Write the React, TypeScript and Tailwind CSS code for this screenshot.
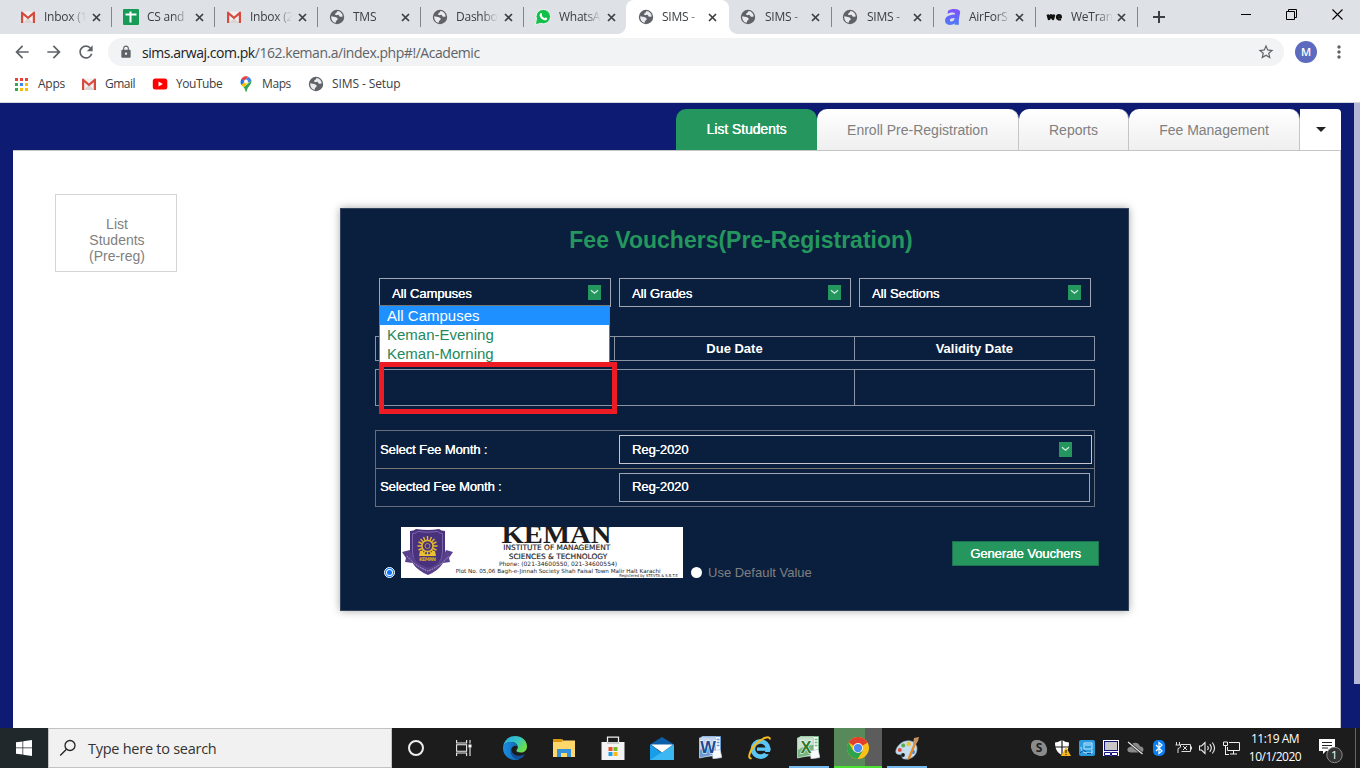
import React from "react";
import { MdArrowBack, MdArrowForward, MdRefresh, MdLock, MdStarBorder, MdMoreVert } from "react-icons/md";

const ui = "font-['Open_Sans','Noto_Sans',sans-serif]";

function Globe() {
  return (
    <svg width="16" height="16" viewBox="0 0 16 16">
      <circle cx="8" cy="8" r="7.2" fill="#5f6368" />
      <path d="M2.2 7.2C4 7.4 5.6 7.6 7.4 8.6 8.8 9.4 9.2 10.2 8 11.2 6.6 12 7 12.8 6.8 13.8 4 13.4 2 10.6 2.2 7.2Z" fill="#e9ebee" />
      <path d="M8.6 2.1c-.8.8-.4 1.3-1.6 1.8-1.2.4-1.2 1.6-.2 2.2 1.2.4 1.6-.6 2.8-.2.8.4.6 1.4 1.6 1.8.8.3 1.6-.4 2.6-.1C13.6 4.6 11.4 2.4 8.600 2.100Z" fill="#e9ebee" />
    </svg>
  );
}

function Gmail() {
  return (
    <svg width="16" height="16" viewBox="0 0 16 16">
      <rect x="1" y="2.5" width="14" height="11.500" rx="1" fill="#f1efef" />
      <path d="M3 14 8 9l5 5Z" fill="#d8d5d5" />
      <path d="M1 3.500C1 2.800 1.500 2.500 2.200 2.500L8 7.400l5.800-4.900c.7 0 1.200.3 1.200 1V14h-2.200V6.300L8 10.300 3.200 6.300V14H1Z" fill="#d54b3d" />
    </svg>
  );
}

function Sheets() {
  return (
    <svg width="16" height="16" viewBox="0 0 16 16">
      <rect width="16" height="16" rx="1" fill="#169c56" />
      <path d="M2.500 5.500h11M7.500 2.500v11" stroke="#fff" strokeWidth="2" />
    </svg>
  );
}

function WhatsApp() {
  return (
    <svg width="16" height="16" viewBox="0 0 16 16">
      <path d="M1.500 9.800.3 15.700l5.500-1.400" fill="#fff" />
      <circle cx="8.300" cy="7.600" r="7.200" fill="#12bf4b" stroke="#fff" strokeWidth=".8" />
      <path d="M1.800 10.200 1 15l4.600-1.100" fill="#12bf4b" />
      <path d="M5.600 4.200c.8-.6 1.200.2 1.500 1.200.1.500-.6.800-.4 1.200.6 1.200 1.500 2 2.600 2.500.5.200.8-.8 1.300-.7.700.3 1.800.7 1.600 1.300-.3 1.400-1.600 1.900-3 1.500C6.700 10.400 5.200 8.600 4.700 7c-.3-1.200.2-2.300.9-2.800Z" fill="#fff" />
    </svg>
  );
}

function AirIcon() {
  return (
    <svg width="17" height="18" viewBox="0 0 17 18" className="shrink-0">
      <defs>
        <linearGradient id="air" x1="0" y1="0" x2="0" y2="1">
          <stop offset="0" stopColor="#8050ff" />
          <stop offset="1" stopColor="#4c7cf5" />
        </linearGradient>
      </defs>
      <path d="M4 2.800C7 .6 14.500.2 16 3.300c.5 1.300-.2 3-.7 5.500-.4 2-.6 3.500-.4 8h-4.300l.1-1.500C8 18 1.500 17.600 1.100 13.200.7 8.800 5 6.600 11 6.600c.6-2.500-3.400-2.800-7.500-.7Zm6.700 7.200c-3 0-4.900.7-4.800 2.400.1 2.100 4.400 1.400 4.800-2.400Z" fill="url(#air)" />
    </svg>
  );
}

function WeIcon() {
  return (
    <svg width="17" height="10" viewBox="0 0 17 10" className="shrink-0">
      <path d="M1.800 2.500 3 6.800 5 3.500 7 6.800 8 2.500" fill="none" stroke="#111" strokeWidth="2.700" strokeLinejoin="round" />
      <path d="M10.800 5.200h4.200C15 2.500 10.800 2.300 10.800 5s2.400 2.800 4.200 2.200" fill="none" stroke="#111" strokeWidth="2" />
    </svg>
  );
}

function TabX() {
  return (
    <svg width="9" height="9" viewBox="0 0 9 9">
      <path d="m1 1 7 7m0-7-7 7" stroke="#3c4043" strokeWidth="1.700" />
    </svg>
  );
}

const tabs: { t: string; icon: React.ReactNode; cls: string }[] = [
  { t: "Inbox (1", icon: <Gmail />, cls: "w-[103px]" },
  { t: "CS and", icon: <Sheets />, cls: "w-[103px]" },
  { t: "Inbox (2", icon: <Gmail />, cls: "w-[103px]" },
  { t: "TMS", icon: <Globe />, cls: "w-[103px]" },
  { t: "Dashbo", icon: <Globe />, cls: "w-[103px]" },
  { t: "WhatsA", icon: <WhatsApp />, cls: "w-[103px]" },
  { t: "SIMS -", icon: <Globe />, cls: "w-[103px]" },
  { t: "SIMS -", icon: <Globe />, cls: "w-[102px]" },
  { t: "SIMS -", icon: <Globe />, cls: "w-[102px]" },
  { t: "AirForS", icon: <AirIcon />, cls: "w-[102px]" },
  { t: "WeTran", icon: <WeIcon />, cls: "w-[102px]" },
];

function TabStrip() {
  return (
    <div className="flex h-[34px] bg-[#dee1e6] pl-2">
      {tabs.map((tab, i) => {
        const active = i === 6;
        return (
          <div key={i} className={`relative flex h-[34px] shrink-0 items-center pl-3 ${tab.cls} ${active ? "rounded-t-lg bg-white" : ""}`}>
            {active && (
              <>
                <span className="absolute bottom-0 -left-2 size-2 bg-[radial-gradient(circle_at_0_0,transparent_7.5px,white_8px)]" />
                <span className="absolute -right-2 bottom-0 size-2 bg-[radial-gradient(circle_at_100%_0,transparent_7.5px,white_8px)]" />
              </>
            )}
            <span className={`flex w-4 shrink-0 justify-center ${i > 6 ? "-ml-px mr-px" : ""}`}>{tab.icon}</span>
            <span className="ml-2 w-[42px] shrink-0 text-[12px] tracking-[-0.25px] whitespace-nowrap text-[#3c4043] [mask-image:linear-gradient(90deg,black_26px,transparent_42px)]">{tab.t}</span>
            <span className={i > 5 ? "ml-1" : "ml-[5.500px]"}><TabX /></span>
            {i !== 5 && i !== 6 && <span className="absolute top-[7px] -right-px h-5 w-px bg-[#80868b]" />}
          </div>
        );
      })}
      <span className="flex w-11 items-center justify-center">
        <svg width="12" height="12" viewBox="0 0 12 12"><path d="M6 0v12M0 6h12" stroke="#3c4043" strokeWidth="2" /></svg>
      </span>
      <div className="ml-auto flex h-7 items-center gap-[35px] pr-[17px]">
        <svg width="10" height="10" viewBox="0 0 10 10"><path d="M0 5.500h10" stroke="#000" /></svg>
        <svg width="11" height="11" viewBox="0 0 11 11" fill="none" stroke="#000"><path d="M.5 2.500h8v8h-8zM2.500 2.500v-2h8v8h-2" /></svg>
        <svg width="11" height="11" viewBox="0 0 11 11"><path d="m.5.5 10 10m0-10-10 10" stroke="#000" strokeWidth="1.100" /></svg>
      </div>
    </div>
  );
}

function Toolbar() {
  return (
    <div className="flex h-[36px] items-center bg-white pl-3">
      <MdArrowBack className="size-5 text-[#5f6368]" />
      <MdArrowForward className="ml-3 size-5 text-[#5f6368]" />
      <MdRefresh className="ml-3 size-5 text-[#5f6368]" />
      <div className="ml-3 flex h-7 w-[1176px] items-center rounded-full bg-[#f1f3f4] pr-[9px] pl-[11px]">
        <MdLock className="size-[14px] text-[#5f6368]" />
        <span className="ml-[9px] text-[14px] tracking-[-0.46px] text-[#5f6368]">
          <span className="text-[#202124]">sims.arwaj.com.pk</span>/162.keman.a/index.php#!/Academic
        </span>
        <MdStarBorder className="ml-auto size-[18px] text-[#5f6368]" />
      </div>
      <span className="ml-[11px] flex size-[22px] items-center justify-center rounded-full bg-[#5c6bc0] text-[11px] font-semibold text-white">M</span>
      <MdMoreVert className="ml-3 size-5 text-[#5f6368]" />
    </div>
  );
}

function Bookmarks() {
  const dots = ["#ea4335", "#ea4335", "#ea4335", "#34a853", "#4285f4", "#fbbc05", "#34a853", "#fbbc05", "#fbbc05"];
  return (
    <div className="flex h-[33px] items-center border-b border-[#d5d7da] bg-white pb-1 pl-[14px] text-[12px] text-[#3c4043]">
      <svg width="14" height="14" viewBox="0 0 14 14">
        {dots.map((c, i) => <rect key={i} x={1 + (i % 3) * 5} y={1 + Math.floor(i / 3) * 5} width="3" height="3" fill={c} />)}
      </svg>
      <span className="ml-[10px] w-[43px] tracking-[-0.25px]">Apps</span>
      <Gmail />
      <span className="ml-2 w-[47px] tracking-[-0.5px]">Gmail</span>
      <svg width="16" height="16" viewBox="0 0 16 16"><rect x=".8" y="2.500" width="14.500" height="11" rx="2.500" fill="#f00" /><path d="m6.500 5.500 4.300 2.500-4.300 2.500Z" fill="#fff" /></svg>
      <span className="ml-2 w-[62px] tracking-[-0.45px]">YouTube</span>
      <svg width="16" height="16" viewBox="0 0 16 16">
        <path d="M3.500 9.200C2 7 2.300 4.500 3.700 2.500L7 5.500Z" fill="#1a73e8" />
        <path d="M3.600 2.600C5.500.2 8.200 0 10 .7L6.500 5.800Z" fill="#ea4335" />
        <path d="M10 .7c2 .7 3.300 2.500 3.400 4.300L9.500 7 7.500 3.700Z" fill="#4285f4" />
        <path d="m3.500 9 3-3.500L9.700 7 5.600 11.600Z" fill="#fbbc04" />
        <path d="M13.400 4.500c.3 4.500-4 6-4.700 10.800-.2.700-1 .7-1.200 0-.3-1.500-.8-2.500-1.900-3.700L13.400 4.500Z" fill="#34a853" />
        <circle cx="8" cy="5.500" r="1.900" fill="#fff" />
      </svg>
      <span className="ml-2 w-[46px] tracking-[-0.4px]">Maps</span>
      <Globe />
      <span className="ml-2 tracking-[-0.1px]">SIMS - Setup</span>
    </div>
  );
}

function NavTab({ label, cls }: { label: string; cls: string }) {
  return (
    <div className={`flex h-full items-center justify-center rounded-t-[10px] border-r border-[#c5c5c5] bg-linear-to-b from-white to-[#efefef] pt-[2px] text-[#808080] ${cls}`}>{label}</div>
  );
}

function Chev() {
  return (
    <span className="mb-px flex h-[15px] w-[13px] items-center justify-center bg-[#24965e]">
      <svg width="9" height="6" viewBox="0 0 9 6"><path d="m1 1.200 3.500 3L8 1.200" fill="none" stroke="#d8eee2" strokeWidth="1.200" /></svg>
    </span>
  );
}

function Select({ label, children }: { label: string; children?: React.ReactNode }) {
  return (
    <div className="relative flex h-[29px] w-[232px] items-center justify-between border border-[#a0a7b2] pr-[9px] pl-3 text-[13px] text-white [text-shadow:0.3px_0_0_white]">
      <span className="pt-[2px] tracking-[-0.05px]">{label}</span>
      <Chev />
      {children}
    </div>
  );
}

function Banner() {
  return (
    <svg width="282" height="51" viewBox="0 0 282 51" className="block">
      <rect width="282" height="51" fill="#fff" />
      <path d="M9 4q4 0 6-2 12 2 23 0 2 2 6 2V25Q44 41 27 47 9 41 9 25Z" fill="#49327d" />
      <path d="M11.500 6.500q4 0 5-2 10 1.500 20 0 2 2 5 2V25q0 13-14.500 18.500Q11.500 38 11.500 25Z" fill="none" stroke="#8a72b5" strokeWidth=".8" />
      <path d="M1 25 9 23q4 14 18 18 14-4 18-18l7 2-4 6 1 4-7 1q-5 8-15 12-10-4-15-12L4 35l1-4Z" fill="#59418d" />
      <path d="M6 29q8 10 21 15 13-5 21-15" fill="none" stroke="#b9abd0" strokeWidth="1" strokeDasharray="1.500 1" />
      <g stroke="#e5b92e" strokeWidth="1.400" transform="translate(26.500 19)">
        <path d="M0-10V10M-10 0H10M-7-7 7 7M7-7-7 7M-4-9 4 9M4-9-4 9M-9-4 9 4M9-4-9 4" />
        <circle r="5.500" fill="#49327d" />
        <circle r="2.500" fill="none" strokeWidth=".7" />
      </g>
      <path d="M19 24q3-1 4 2 1 2 3.500 1 2.500 1 3.500-1 1-3 4-2l1 5H18Z" fill="#e9c232" />
      <text x="18" y="34" textLength="17" fontSize="5" fontWeight="bold" fill="#d6a62b" fontFamily="DejaVu Sans">KEMAN</text>
      <g fill="#1d1d1d">
        <text x="100.500" y="16" textLength="110" lengthAdjust="spacingAndGlyphs" fontSize="25" fontWeight="bold" fontFamily="Liberation Serif, serif">KEMAN</text>
        <g fontFamily="DejaVu Sans, sans-serif">
          <text x="102.300" y="23" textLength="107" lengthAdjust="spacingAndGlyphs" fontSize="7.300" stroke="#1d1d1d" strokeWidth=".15">INSTITUTE OF MANAGEMENT</text>
          <text x="107.700" y="32" textLength="98.500" lengthAdjust="spacingAndGlyphs" fontSize="7.300" stroke="#1d1d1d" strokeWidth=".15">SCIENCES &amp; TECHNOLOGY</text>
          <text x="98" y="39.300" textLength="118" lengthAdjust="spacingAndGlyphs" fontSize="6">Phone: (021-34600550, 021-34600554)</text>
          <text x="54.700" y="46" textLength="205" lengthAdjust="spacingAndGlyphs" fontSize="5.600">Plot No. 05,06 Bagh-e-Jinnah Society Shah Faisal Town Malir Halt Karachi</text>
          <text x="218.300" y="50" textLength="58.500" lengthAdjust="spacingAndGlyphs" fontSize="4">Registered by STEVTA &amp; S.B.T.E</text>
        </g>
      </g>
    </svg>
  );
}

function Card() {
  const line = "border-[#8a93a1]";
  return (
    <div className="mt-[57px] ml-[163px] flex h-[403px] w-[789px] flex-col border border-[#33435c] bg-[#0a1f3d] pl-[34px] text-[13px] text-white shadow-[0_0_8px_rgba(0,0,0,0.35)]">
      <h1 className="mt-[17px] mr-[21px] h-7 text-center text-[23px] leading-7 font-bold text-[#24965e]">Fee Vouchers(Pre-Registration)</h1>
      <div className="mt-6 ml-1 flex gap-2">
        <Select label="All Campuses">
          <div className="absolute top-[26px] -left-px z-10 w-[231px] border border-[#767676] bg-white text-[15px] leading-[19px] text-[#24885c] [text-shadow:none]">
            <div className="bg-[#1e90ff] pl-[7px] text-white">All Campuses</div>
            <div className="pl-[7px]">Keman-Evening</div>
            <div className="h-[19px] pl-[7px]">Keman-Morning</div>
          </div>
        </Select>
        <Select label="All Grades" />
        <Select label="All Sections" />
      </div>
      <div className={`mt-[29px] grid h-[25px] w-[720px] grid-cols-3 border text-center leading-[23px] font-bold ${line}`}>
        <div className={`border-r ${line}`} />
        <div className={`border-r ${line}`}>Due Date</div>
        <div>Validity Date</div>
      </div>
      <div className={`relative mt-2 grid h-[37px] w-[720px] shrink-0 grid-cols-3 border ${line}`}>
        <div className={`border-r ${line}`} />
        <div className={`border-r ${line}`} />
        <div />
        <div className="absolute -top-2 left-[3px] z-20 h-[52px] w-[238px] border-[5px] border-[#ed1c24]" />
      </div>
      <div className="mt-6 w-[720px] border border-[#666e7b] tracking-[-0.1px] [text-shadow:0.3px_0_0_white]">
        <div className="flex h-[38px] items-center border-b border-[#777]">
          <span className="w-[243px] shrink-0 pl-[4px]">Select Fee Month :</span>
          <div className="flex h-[29px] w-[473px] shrink-0 items-center justify-between border border-[#c4c8ce] pr-[19px] pl-3"><span className="pt-px">Reg-2020</span><Chev /></div>
        </div>
        <div className="flex h-[37px] items-center">
          <span className="w-[243px] shrink-0 pb-[2px] pl-[4px]">Selected Fee Month :</span>
          <div className="flex h-[29px] w-[471px] shrink-0 items-center border border-[#a0a7b2] pb-px pl-3">Reg-2020</div>
        </div>
      </div>
      <div className="mt-5 flex items-start">
        <span className="mt-[40px] ml-[9px] flex size-[11px] items-center justify-center rounded-full border border-white bg-[#0b75ff]"><span className="flex size-[7px] items-center justify-center rounded-full bg-white"><span className="size-[5px] rounded-full bg-[#0b75ff]" /></span></span>
        <div className="ml-[6px]"><Banner /></div>
        <span className="mt-[40px] ml-2 size-[11px] rounded-full bg-white" />
        <span className="mt-[36px] ml-[6px] w-[244px] text-[13px] leading-5 text-[#808080]">Use Default Value</span>
        <div className="mt-[14px] h-[25px] w-[147px] border border-[#1c7150] bg-[#24965e] text-center leading-[23px] tracking-[-0.08px] [text-shadow:0.3px_0_0_white]">Generate Vouchers</div>
      </div>
    </div>
  );
}

function Page() {
  return (
    <div className="flex h-[625px] bg-[#0d1b72] pl-[13px] font-['Liberation_Sans',Arial,sans-serif] text-[14px]">
      <div className="w-[1328px] shrink-0">
        <div className="mt-[6px] flex h-[41px] pl-[663px]">
          <div className="flex h-full w-[141px] items-center justify-center rounded-t-[10px] bg-[#24965e] tracking-[-0.08px] text-white [text-shadow:0.3px_0_0_white]">List Students</div>
          <NavTab label="Enroll Pre-Registration" cls="w-[202px]" />
          <NavTab label="Reports" cls="w-[110px]" />
          <NavTab label="Fee Management" cls="w-[171px]" />
          <div className="flex h-full grow items-center justify-center rounded-tr-sm bg-white">
            <svg width="10" height="5" viewBox="0 0 10 5"><path d="M0 0h10L5 5Z" fill="#222" /></svg>
          </div>
        </div>
        <div className="flex h-[578px] items-start border-t border-r border-[#c5c5c5] bg-white">
          <div className="mt-[43px] ml-[42px] h-[78px] w-[122px] border border-[#d4d4d4] pt-[21px] pl-[2px] text-center leading-4 text-[#808080]">List<br />Students<br />(Pre-reg)</div>
          <Card />
        </div>
      </div>
      <div className="ml-[13px] h-[581px] w-[6px] bg-[#b4b8d6]" />
    </div>
  );
}

function Edge() {
  return (
    <svg width="24" height="24" viewBox="0 0 24 24">
      <defs>
        <linearGradient id="e1" x1="0" x2="1" y1="0" y2=".5"><stop offset="0" stopColor="#2aa6e2" /><stop offset=".6" stopColor="#35c6c4" /><stop offset="1" stopColor="#6ede47" /></linearGradient>
        <linearGradient id="e2" x1="0" x2="1"><stop offset="0" stopColor="#1b8fe0" /><stop offset="1" stopColor="#1264b5" /></linearGradient>
      </defs>
      <path d="M0 11C1 4 6 0 12 0c8 0 12 5.500 12 10.500 0 4-3 6-6 6-3.500 0-5-1-4.500-2.500.4-.8 1.300-1.200 1.300-2.800C14.800 9 12.500 6 8.500 6 4 6 1 8.500 0 11Z" fill="url(#e1)" />
      <path d="M0 11c1-3 4-5 8-5 3.500 0 6 2 6.600 4.500C13 8.500 8 10 8 14.500c0 5 4.500 8 8.500 9C7 26 0 19.500 0 12Z" fill="url(#e2)" />
      <path d="M8.500 11.800C7.500 19 15 22 22 18c-1.500 3-4 4.800-7 5.700C9 22.500 6 16 8.500 11.800Z" fill="#14509a" />
    </svg>
  );
}

function Folder() {
  return (
    <svg width="22" height="18" viewBox="0 0 22 18">
      <path d="M0 0h9l1.500 2H22v16H0Z" fill="#f5bd3f" /><path d="M0 0h9v3H0Z" fill="#dc950d" /><path d="M0 3h9l1.500-1.500H22V18H0Z" fill="#ffd76b" />
      <path d="M4 18v-8h14v8h-4v-4H8v4Z" fill="#3492dc" />
    </svg>
  );
}

function Store() {
  return (
    <svg width="24" height="24" viewBox="0 0 24 24">
      <path d="M6.500 7V1.200h11V7" fill="none" stroke="#eee" strokeWidth="1.300" />
      <path d="M.5 6h23v18H.500Z" fill="#f3f3f3" /><path d="M6 6h12v2H6Z" fill="#cfcfcf" />
      <path d="M7.500 11h4v4h-4z" fill="#e8502e" /><path d="M12.500 11h4v4h-4z" fill="#7eb928" /><path d="M7.500 16h4v4h-4z" fill="#1ba1e6" /><path d="M12.500 16h4v4h-4z" fill="#fdb913" />
    </svg>
  );
}

function Mail() {
  return (
    <svg width="24" height="23" viewBox="0 0 24 23">
      <path d="M0 7.500 12 0l12 7.500V12H0Z" fill="#0c5ea9" /><path d="M0 7.500 12 16 24 7.500V23H0Z" fill="#1a9de8" /><path d="M0 23 24 7.500V23Z" fill="#3bb8f3" /><path d="M1 7.500h22L12 15.500Z" fill="#fff" />
    </svg>
  );
}

function Office({ letter, dark, light }: { letter: string; dark: string; light: string }) {
  return (
    <svg width="23" height="23" viewBox="0 0 23 23">
      <path d="M3 .5h18.500V20H3Z" fill="#f4f7fb" stroke={light} />
      <path d="M17.500 3.500h3M17.500 6.500h3M17.500 9.500h3" stroke={light} strokeWidth="1.300" />
      <path d="M.5 2 4 1h13v17.500L.5 22Z" fill={light} stroke="#fff" strokeWidth=".6" />
      <path d="M1 2.500 4 1.500h12.500V9Q8 9 1 14Z" fill="#fff" opacity=".6" />
      <path d="m13 15 8-1.500 2 8-9 1.500Z" fill="#f8fafc" stroke="#b7c2ce" strokeWidth=".6" />
      <text x="9" y="16.500" textAnchor="middle" fontFamily="Liberation Sans, sans-serif" fontSize="16.500" fontWeight="bold" fill={dark} stroke="#fff" strokeWidth="1" paintOrder="stroke">{letter}</text>
    </svg>
  );
}

function IE() {
  return (
    <svg width="24" height="24" viewBox="0 0 24 24">
      <circle cx="12.500" cy="13" r="7.600" fill="none" stroke="#5ac6f5" strokeWidth="4.600" />
      <path d="M15 16h8v2.500l-5-.5Z" fill="#1c1c1c" /><path d="M9 11.500h13.500v3.300H9Z" fill="#5ac6f5" />
      <path d="M3.500 22C-1 24 1.500 14 8 8 14 2 22-1 22 3.500" fill="none" stroke="#f5b91d" strokeWidth="2" />
    </svg>
  );
}

function Chrome() {
  return (
    <svg width="22" height="22" viewBox="0 0 24 24">
      <circle cx="12" cy="12" r="12" fill="#fbc116" />
      <path d="M12 12 1.600 6A12 12 0 0 1 22.400 6Z" fill="#e2402f" /><path d="M12 6h10.400L12 12Z" fill="#e2402f" />
      <path d="M1.600 6A12 12 0 0 0 11.500 24L17.200 15 12 12 6.800 15Z" fill="#2fa24c" />
      <circle cx="12" cy="12" r="5.500" fill="#f2f2f2" /><circle cx="12" cy="12" r="4.500" fill="#4a8af4" />
    </svg>
  );
}

function Paint() {
  return (
    <svg width="25" height="25" viewBox="0 0 25 25">
      <path d="M4 9C9 3 21 3 22 12c.5 8-7 12-13 11-3-.5-1-4-4-4.500C-1 19 0 13 4 9Z" fill="#c4ddec" stroke="#8aa9bf" strokeWidth=".6" />
      <circle cx="4.800" cy="14" r="2" fill="#df4a3b" /><circle cx="8.200" cy="9.500" r="2" fill="#55ad4e" /><circle cx="13.700" cy="8" r="2.200" fill="#f0c030" /><circle cx="8" cy="19" r="1.900" fill="#1c1c1c" /><circle cx="18" cy="16" r="2" fill="#4d87d6" />
      <path d="M12 24 19 7l2 1-6 15Z" fill="#e78824" /><path d="m18 8 1-6 5-1-1 4-2.500 4Z" fill="#c99360" />
    </svg>
  );
}

const cell = "flex h-10 w-[49px] shrink-0 items-center justify-center";

function Taskbar() {
  return (
    <div className="flex h-10 bg-[#1c1c1c] text-white">
      <div className="flex w-12 shrink-0 items-center justify-center bg-[#20282c]">
        <svg width="16" height="16" viewBox="0 0 16 16" fill="#fff"><path d="M0 2.300 6.500 1.400v6.200H0ZM7.200 1.300 16 0v7.600H7.200ZM0 8.300h6.500v6.300L0 13.700ZM7.200 8.300H16V16l-8.800-1.300Z" /></svg>
      </div>
      <div className="flex w-[344px] shrink-0 items-center border border-[#c2c2c2] bg-[#f1f1f1] pl-[10px] text-[#333]">
        <svg width="18" height="18" viewBox="0 0 18 18" fill="none" stroke="#222" strokeWidth="1.300"><circle cx="11" cy="6.500" r="5" /><path d="M7.500 10.200 1.200 16.500" /></svg>
        <span className="ml-[11px] pt-px text-[14.500px] tracking-[-0.26px]">Type here to search</span>
      </div>
      <div className="flex w-12 shrink-0 items-center justify-center"><span className="size-4 rounded-full border-[2px] border-[#eee]" /></div>
      <div className="flex w-[47px] shrink-0 items-center justify-center">
        <svg width="16" height="16" viewBox="0 0 16 16" fill="none" stroke="#eee" strokeWidth="1.100"><path d="M.6 0v3h10V0M.6 16v-3h10v3M.6 4.700h10v6.600H.6ZM14 0v3.500M14 7.500V16" /><path d="M12.500 4.500h3v3h-3z" fill="#fff" stroke="none" /></svg>
      </div>
      <div className={`${cell} ml-[3px]`}><Edge /></div>
      <div className={cell}><Folder /></div>
      <div className={cell}><Store /></div>
      <div className={cell}><Mail /></div>
      <div className={`${cell} pb-[2px]`}><Office letter="W" dark="#1c4b91" light="#6c9bd3" /></div>
      <div className={cell}><IE /></div>
      <div className={`${cell} relative pb-[2px]`}><Office letter="X" dark="#2c7a2c" light="#76b581" /><span className="absolute bottom-0 left-[5px] h-[2px] w-10 bg-[#76b9ed]" /></div>
      <div className="relative ml-px flex h-10 w-12 shrink-0 items-center justify-center bg-linear-to-r from-[#57895a] from-65% to-[#5c5c5c] to-65%"><Chrome /><span className="absolute bottom-0 h-[2px] w-full bg-[#4be234]" /></div>
      <div className="relative ml-px flex h-10 w-12 shrink-0 items-center justify-center"><Paint /><span className="absolute bottom-0 left-1 h-[2px] w-10 bg-[#76b9ed]" /></div>
      <div className="ml-24 grid w-[216px] shrink-0 grid-cols-9 place-items-center">
        <svg width="16" height="16" viewBox="0 0 16 16"><rect width="12" height="12" rx="5" fill="#8b8b8b" /><rect x="4" y="4" width="12" height="12" rx="5" fill="#8b8b8b" /><circle cx="8" cy="8" r="7.300" fill="#8b8b8b" /><text x="8" y="12.200" textAnchor="middle" fontSize="12" fontWeight="bold" fill="#222" fontFamily="Open Sans, sans-serif">S</text></svg>
        <svg width="16" height="16" viewBox="0 0 16 16"><path d="M7 0q3 2 7 2.500C14 10 11 13 7 15 3 13 0 10 0 2.500 4 2 7 0 7 0Z" fill="#fff" /><path d="M7 0v15M0 7h14" stroke="#1c1c1c" strokeWidth="1.200" /><path d="m11 7 5 9H6Z" fill="#f6b81d" /><path d="M11 10v3M11 14v1" stroke="#111" /></svg>
        <svg width="16" height="16" viewBox="0 0 16 16"><rect width="16" height="16" rx="2" fill="#2b9be0" /><path d="M5 3h8v6H5ZM2 7c0 4 3 6 6 6h5V10M6 5h6" fill="none" stroke="#c7ebff" /><path d="M1 13q4-4 6-1M8 13.500h4" stroke="#0a4e8e" fill="none" /></svg>
        <svg width="16" height="16" viewBox="0 0 16 16"><rect width="16" height="16" fill="#fff" /><rect x="1.500" y="1.500" width="13" height="9" fill="#c8c8c8" stroke="#14147a" /><path d="M1.500 12.500h6v3h-6zM8.500 12.500h6v3h-6z" fill="#fff" stroke="#14147a" /></svg>
        <svg width="17" height="14" viewBox="0 0 17 14"><path d="M4 11.500C-1 11.500-.5 6 3.500 6c1-6 8.500-5.500 9.500-.5 4.500-.5 4.500 6 1 6Z" fill="#8a8a8a" /><path d="m1 1 14.500 12" stroke="#1c1c1c" strokeWidth="2.500" /><path d="m1 1 14.500 12" stroke="#eee" strokeWidth="1.100" /></svg>
        <svg width="12" height="16" viewBox="0 0 12 16"><rect width="12" height="16" rx="5" fill="#0a7ff2" /><path d="m3 5 6 6-3 2.500v-11L9 5l-6 6" fill="none" stroke="#fff" strokeWidth="1.200" /></svg>
        <svg width="17" height="12" viewBox="0 0 17 12" fill="none" stroke="#ddd"><path d="M5.500 2.500h10v7h-9M16.500 4.500v3M1.500 0v3M4.500 0v3M.5 3h5v2Q5 6 3 6.500V11M8 4l4 4M12 4 8 8" /></svg>
        <svg width="17" height="14" viewBox="0 0 17 14" fill="none" stroke="#eee" strokeWidth="1.100"><path d="M.5 5h2L6 1.500v11L2.500 9h-2ZM8.500 5q1.500 2 0 4M10.800 3.200q3 3.800 0 7.600M13.300 1.500q4.500 5.500 0 11" /></svg>
        <svg width="17" height="14" viewBox="0 0 17 14" fill="none" stroke="#eee"><path d="M6 1.500h10.500v8H4.500V6M7 13h7M10.500 9.500V13M.5 1v3.500h4V1ZM2.500 4.500V13.500M2 13.500h4" /></svg>
      </div>
      <div className="flex w-16 shrink-0 flex-col justify-center text-center text-[12px] leading-[18px] tracking-[-0.5px]"><span>11:19 AM</span><span>10/1/2020</span></div>
      <svg className="mt-2 ml-3 shrink-0" width="24" height="28" viewBox="0 0 24 28"><path d="M0 3h16v12H7l-3 3v-3H0Z" fill="#fff" /><path d="M3 6.500h10M3 9.500h10M3 12h6" stroke="#222" /><circle cx="15.500" cy="19" r="7.700" fill="#333" stroke="#888" /><text x="15.300" y="23" textAnchor="middle" fontSize="11.500" fill="#fff" fontFamily="Open Sans, sans-serif">1</text></svg>
      <span className="ml-3 w-px bg-[#666]" />
    </div>
  );
}

export default function App() {
  return (
    <div className={`h-[768px] w-[1360px] overflow-hidden bg-white ${ui}`}>
      <TabStrip />
      <Toolbar />
      <Bookmarks />
      <Page />
      <Taskbar />
    </div>
  );
}
